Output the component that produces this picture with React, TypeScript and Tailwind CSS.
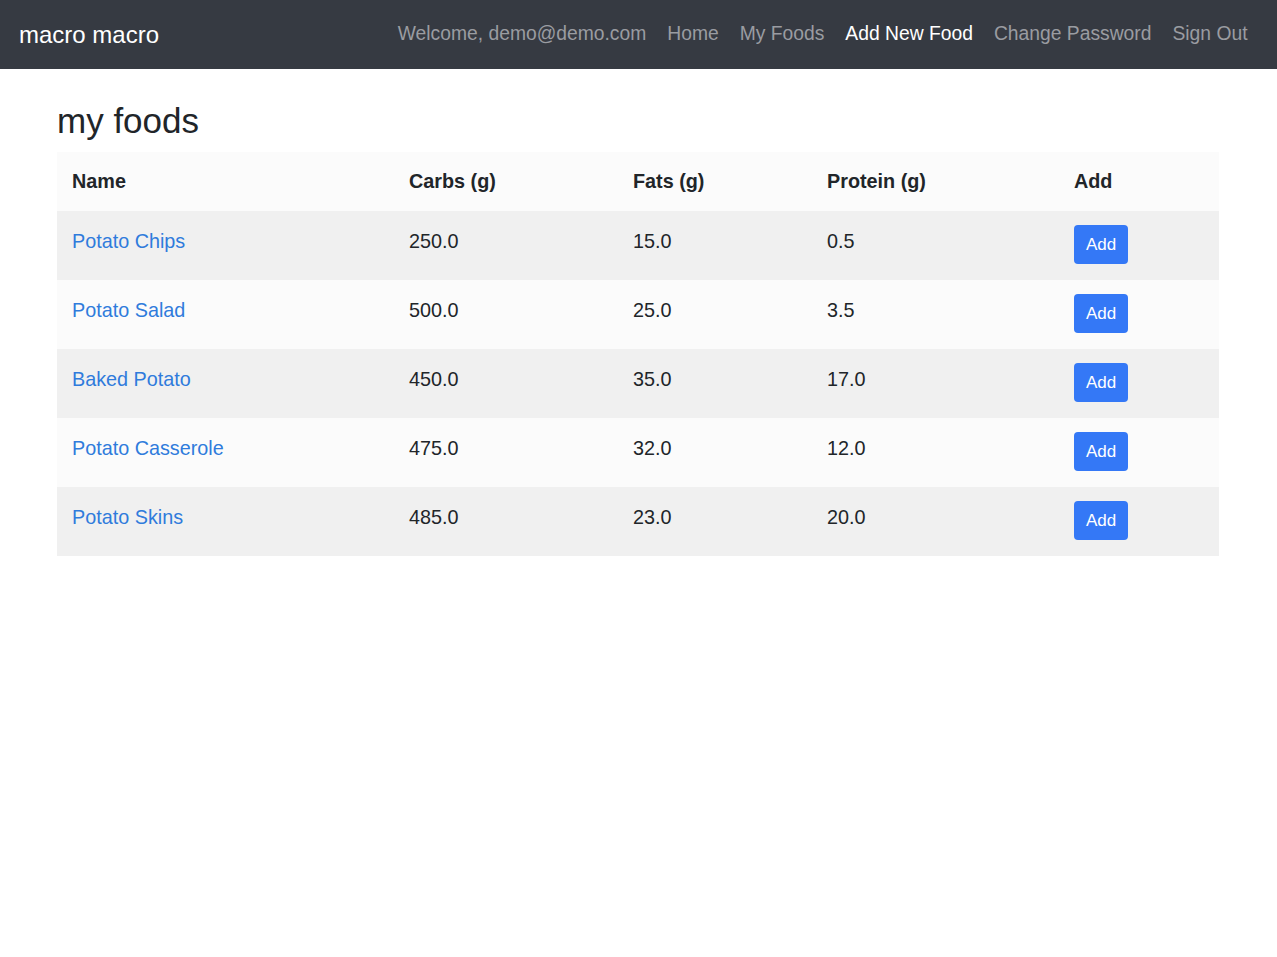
const navLinks = [
  { label: "Welcome, demo@demo.com", active: false },
  { label: "Home", active: false },
  { label: "My Foods", active: false },
  { label: "Add New Food", active: true },
  { label: "Change Password", active: false },
  { label: "Sign Out", active: false },
];

const foods = [
  { name: "Potato Chips", carbs: "250.0", fats: "15.0", protein: "0.5" },
  { name: "Potato Salad", carbs: "500.0", fats: "25.0", protein: "3.5" },
  { name: "Baked Potato", carbs: "450.0", fats: "35.0", protein: "17.0" },
  { name: "Potato Casserole", carbs: "475.0", fats: "32.0", protein: "12.0" },
  { name: "Potato Skins", carbs: "485.0", fats: "23.0", protein: "20.0" },
];

export default function App() {
  return (
    <div className="min-h-screen bg-white font-['Liberation_Sans',Arial,sans-serif] text-[#212529]">
      <nav className="flex h-[69px] items-center justify-between bg-[#363a42] px-[19px]">
        <a href="#" className="text-[24px] text-white">
          macro macro
        </a>
        <ul className="flex items-center">
          {navLinks.map((link) => (
            <li key={link.label}>
              <a
                href="#"
                className={
                  link.active
                    ? "px-[10.5px] text-[19.3px] text-white"
                    : "px-[10.5px] text-[19.3px] text-[#9a9ca1]"
                }
              >
                {link.label}
              </a>
            </li>
          ))}
        </ul>
      </nav>

      <main className="ml-[57px] w-[1162px]">
        <h2 className="mt-[31px] mb-[10px] text-[35px] leading-[1.2] font-medium">my foods</h2>
        <table className="w-full table-fixed border-collapse text-[19.8px]">
          <colgroup>
            <col className="w-[337px]" />
            <col className="w-[224px]" />
            <col className="w-[194px]" />
            <col className="w-[247px]" />
            <col className="w-[160px]" />
          </colgroup>
          <thead>
            <tr className="bg-[#fbfbfb] text-left">
              <th className="h-[59px] px-[15px] font-bold">Name</th>
              <th className="px-[15px] font-bold">Carbs (g)</th>
              <th className="px-[15px] font-bold">Fats (g)</th>
              <th className="px-[15px] font-bold">Protein (g)</th>
              <th className="px-[15px] font-bold">Add</th>
            </tr>
          </thead>
          <tbody>
            {foods.map((food, i) => (
              <tr key={food.name} className={i % 2 === 0 ? "bg-[#f0f0f0]" : "bg-[#fbfbfb]"}>
                <td className="h-[69px] px-[15px] pt-[16px] align-top">
                  <a href="#" className="text-[#2f7bdc]">
                    {food.name}
                  </a>
                </td>
                <td className="px-[15px] pt-[16px] align-top">{food.carbs}</td>
                <td className="px-[15px] pt-[16px] align-top">{food.fats}</td>
                <td className="px-[15px] pt-[16px] align-top">{food.protein}</td>
                <td className="px-[15px] pt-[14px] align-top">
                  <button className="h-[39px] w-[54px] rounded-[4px] bg-[#3478f6] text-[17px] text-white">Add</button>
                </td>
              </tr>
            ))}
          </tbody>
        </table>
      </main>
    </div>
  );
}
